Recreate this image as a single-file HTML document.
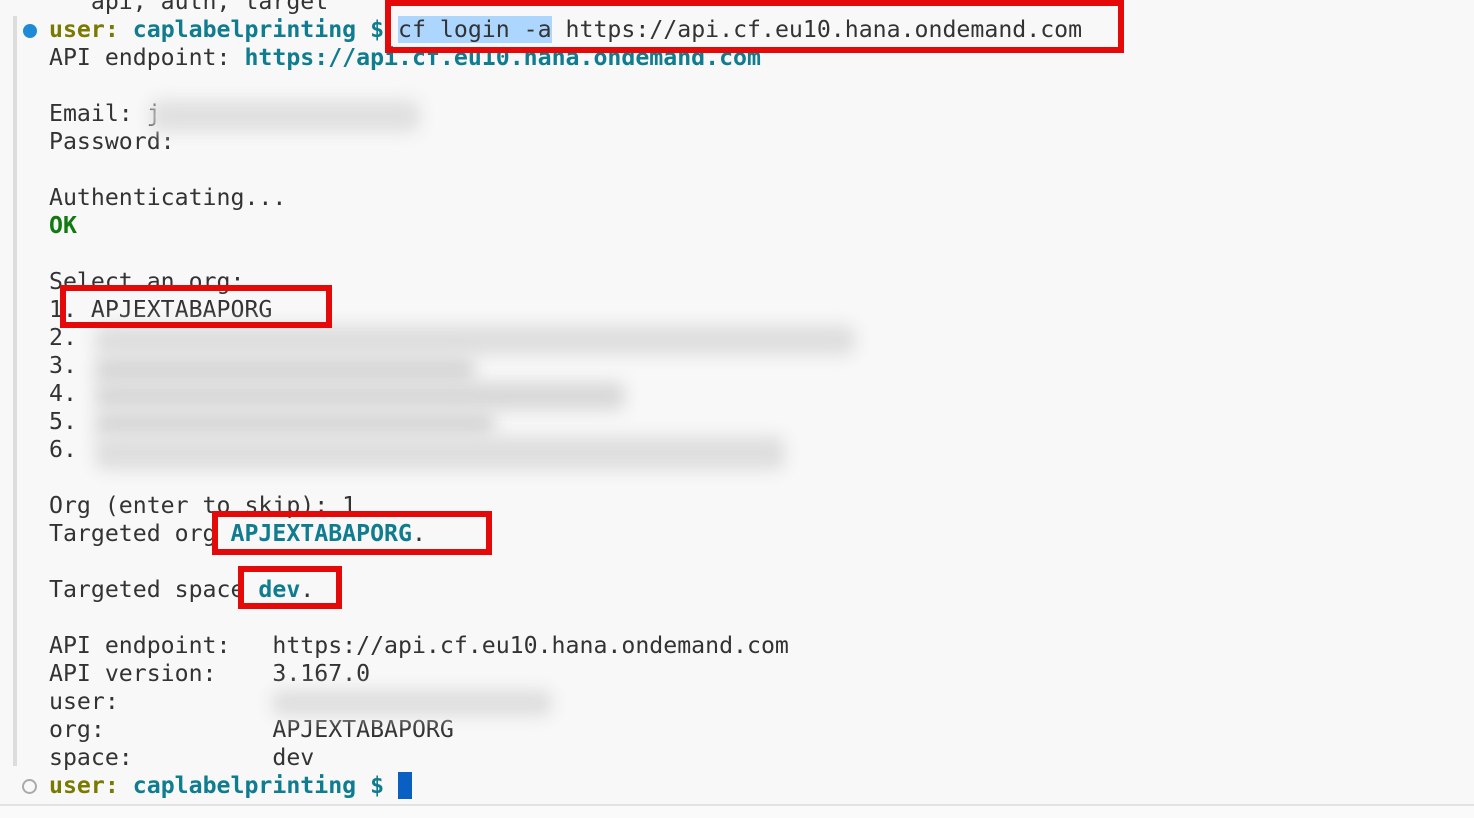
<!DOCTYPE html>
<html><head><meta charset="utf-8"><style>
body{margin:0;width:1474px;height:818px;overflow:hidden;background:#f8f8f8;position:relative;font-family:"DejaVu Sans Mono","Liberation Mono",monospace;font-size:23.2px;color:#333}
.l{position:absolute;left:49px;white-space:pre;line-height:28px;height:28px}
.u{color:#7a7a00;font-weight:bold}.c{color:#0f7c8f;font-weight:bold}.ok{color:#117a11;font-weight:bold}
.r{position:absolute;border:6px solid #e40a0a;box-sizing:border-box}
.b{position:absolute;background:#d8d8d8;filter:blur(8px);border-radius:10px}
</style></head><body>
<div style="position:absolute;left:13px;top:16px;width:4px;height:750px;background:#dcdcdc"></div>
<div style="position:absolute;left:0;top:804px;width:1474px;height:2px;background:#e2e2e2"></div>
<div style="position:absolute;left:0;top:806px;width:1474px;height:12px;background:#fafafa"></div>
<div style="position:absolute;left:23px;top:24px;width:14px;height:14px;border-radius:50%;background:#1f8ad6"></div>
<div style="position:absolute;left:22px;top:779px;width:11px;height:11px;border-radius:50%;border:2px solid #aaa"></div>
<div class="l" style="top:-12px">   api, auth, target</div>
<div class="l" style="top:16px"><span class="u">user:</span> <span class="c">caplabelprinting $</span> <span style="background:#add6ff">cf login -a</span> https://api.cf.eu10.hana.ondemand.com</div>
<div class="l" style="top:44px">API endpoint: <span class="c">https://api.cf.eu10.hana.ondemand.com</span></div>
<div class="l" style="top:100px">Email: j</div>
<div class="l" style="top:128px">Password:</div>
<div class="l" style="top:184px">Authenticating...</div>
<div class="l" style="top:212px"><span class="ok">OK</span></div>
<div class="l" style="top:268px">Select an org:</div>
<div class="l" style="top:296px">1. APJEXTABAPORG</div>
<div class="l" style="top:324px">2.</div><div class="l" style="top:352px">3.</div><div class="l" style="top:380px">4.</div><div class="l" style="top:408px">5.</div><div class="l" style="top:436px">6.</div>
<div class="l" style="top:492px">Org (enter to skip): 1</div>
<div class="l" style="top:520px">Targeted org <span class="c">APJEXTABAPORG</span>.</div>
<div class="l" style="top:576px">Targeted space <span class="c">dev</span>.</div>
<div class="l" style="top:632px">API endpoint:   https://api.cf.eu10.hana.ondemand.com</div>
<div class="l" style="top:660px">API version:    3.167.0</div>
<div class="l" style="top:688px">user:</div>
<div class="l" style="top:716px">org:            APJEXTABAPORG</div>
<div class="l" style="top:744px">space:          dev</div>
<div class="l" style="top:772px"><span class="u">user:</span> <span class="c">caplabelprinting $</span> <span style="display:inline-block;width:14px;height:27px;background:#0a5fc2;vertical-align:-6px"></span></div>
<div class="b" style="left:150px;top:100px;width:270px;height:32px;background:#e0e0e0"></div>
<div class="b" style="left:95px;top:325px;width:760px;height:30px;background:#dedede"></div>
<div class="b" style="left:95px;top:355px;width:380px;height:30px"></div>
<div class="b" style="left:95px;top:382px;width:530px;height:28px"></div>
<div class="b" style="left:95px;top:410px;width:400px;height:28px"></div>
<div class="b" style="left:95px;top:436px;width:690px;height:34px;background:#dedede"></div>
<div class="b" style="left:272px;top:690px;width:280px;height:26px;background:#dedede"></div>
<div class="r" style="left:385px;top:0;width:739px;height:53px"></div>
<div class="r" style="left:60px;top:285px;width:272px;height:43px"></div>
<div class="r" style="left:212px;top:511px;width:280px;height:44px"></div>
<div class="r" style="left:238px;top:566px;width:104px;height:43px"></div>
</body></html>
